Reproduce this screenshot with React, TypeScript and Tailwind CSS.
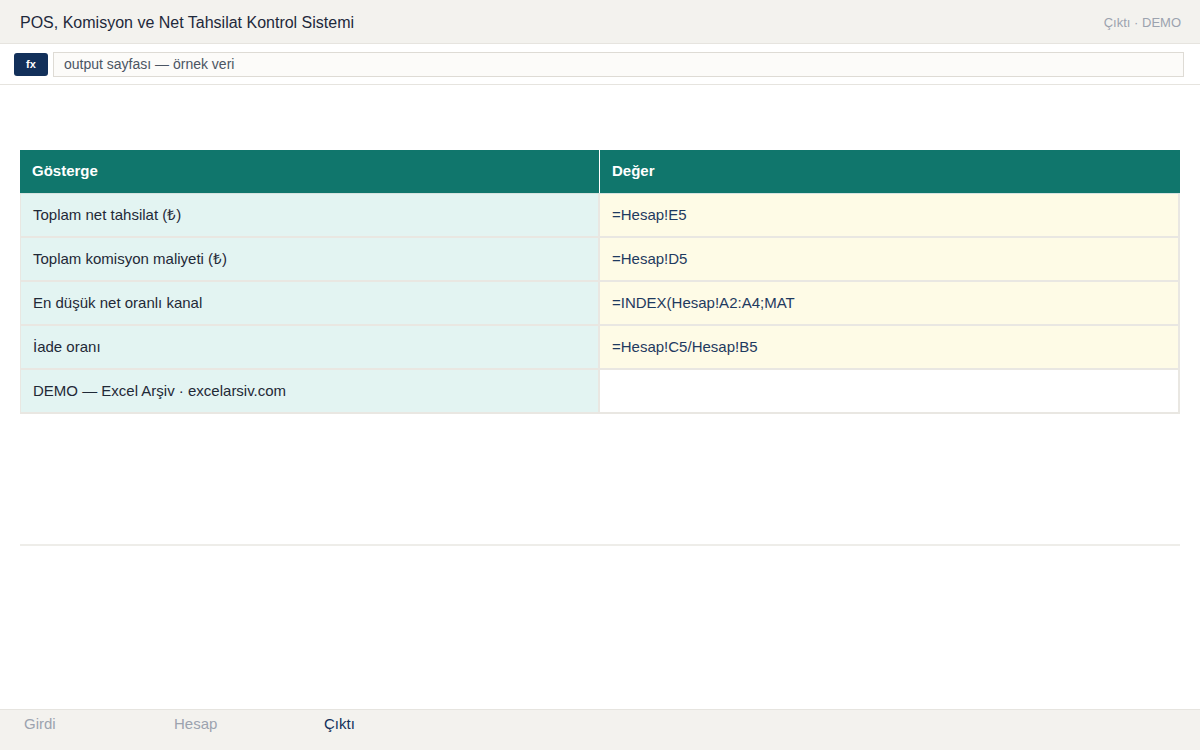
import React from "react";

const rows: { label: string; value: string; filled: boolean }[] = [
  { label: "Toplam net tahsilat (₺)", value: "=Hesap!E5", filled: true },
  { label: "Toplam komisyon maliyeti (₺)", value: "=Hesap!D5", filled: true },
  { label: "En düşük net oranlı kanal", value: "=INDEX(Hesap!A2:A4;MAT", filled: true },
  { label: "İade oranı", value: "=Hesap!C5/Hesap!B5", filled: true },
  { label: "DEMO — Excel Arşiv · excelarsiv.com", value: "", filled: false },
];

export default function App() {
  return (
    <div
      className="w-[1200px] h-[750px] flex flex-col bg-white overflow-hidden"
      style={{ fontFamily: '"Liberation Sans", Arial, sans-serif' }}
    >
      <div className="h-[44px] flex items-center justify-between pl-5 pr-[19px] bg-[#f3f2ee] border-b border-[#e6e4df]">
        <div className="text-[16px] text-[#1e293b] pt-[2px]">POS, Komisyon ve Net Tahsilat Kontrol Sistemi</div>
        <div className="text-[13px] text-[#9ca3af] pt-[2px]">Çıktı · DEMO</div>
      </div>
      <div className="h-[41px] flex items-center gap-[5px] pl-[14px] pr-[16px] border-b border-[#e6e4df]">
        <div className="w-[34px] h-[23px] rounded-[3px] bg-[#12305a] text-white text-[11px] font-bold flex items-center justify-center">
          fx
        </div>
        <div className="flex-1 h-[25px] border border-[#dedbd5] bg-[#fcfbf9] flex items-center px-[10px] text-[14px] text-[#4b5563]">
          output sayfası — örnek veri
        </div>
      </div>
      <div className="flex-1 px-5 pt-[65px]">
        <div className="w-[1160px]">
          <div className="grid grid-cols-[580px_580px] h-[44px] bg-[#10766c] text-white text-[15px] font-semibold border-b border-[#d6e3e0]">
            <div className="flex items-center px-3 border-r border-white">Gösterge</div>
            <div className="flex items-center px-3">Değer</div>
          </div>
          {rows.map((r, i) => (
            <div key={i} className="grid grid-cols-[580px_580px] h-[44px] text-[15px]">
              <div className="flex items-center px-3 bg-[#e3f4f2] text-[#1f2937] border-l border-b-2 border-r-2 border-[#e9e7e2]">
                {r.label}
              </div>
              <div
                className={`flex items-center px-3 text-[#1e3a5f] border-b-2 border-r-2 border-[#e9e7e2] ${
                  r.filled ? "bg-[#fefbe6]" : "bg-white"
                }`}
              >
                {r.value}
              </div>
            </div>
          ))}
          <div className="mt-[130px] h-[2px] bg-[#eeede9]" />
        </div>
      </div>
      <div className="h-[41px] bg-[#f3f2ee] border-t border-[#e6e4df] flex items-start pt-[3px] px-[24px] text-[15px]">
        <div className="w-[150px] text-[#9ca3af]">Girdi</div>
        <div className="w-[150px] text-[#9ca3af]">Hesap</div>
        <div className="w-[150px] text-[#12305a]">Çıktı</div>
      </div>
    </div>
  );
}
